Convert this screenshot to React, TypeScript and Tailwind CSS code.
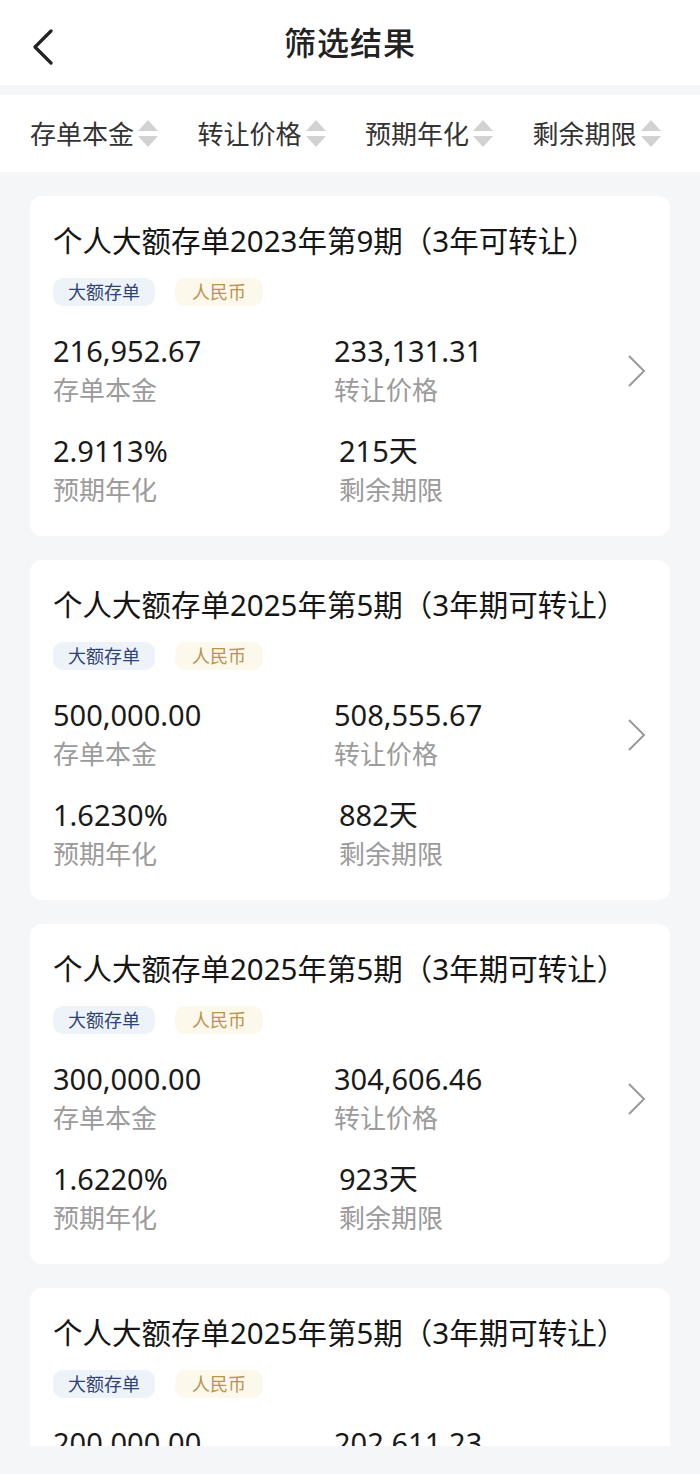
import React from "react";

const font = { fontFamily: '"Noto Sans", "Noto Sans CJK SC", sans-serif' };

type Item = {
  title: string;
  principal: string;
  price: string;
  rate: string;
  days: string;
};

const items: Item[] = [
  { title: "个人大额存单2023年第9期（3年可转让）", principal: "216,952.67", price: "233,131.31", rate: "2.9113%", days: "215天" },
  { title: "个人大额存单2025年第5期（3年期可转让）", principal: "500,000.00", price: "508,555.67", rate: "1.6230%", days: "882天" },
  { title: "个人大额存单2025年第5期（3年期可转让）", principal: "300,000.00", price: "304,606.46", rate: "1.6220%", days: "923天" },
  { title: "个人大额存单2025年第5期（3年期可转让）", principal: "200,000.00", price: "202,611.23", rate: "1.6220%", days: "900天" },
];

function SortIcon() {
  return (
    <svg width="20" height="28" viewBox="0 0 20 28" className="ml-[4px]">
      <path d="M10 0 L20 11 L0 11 Z" fill="#d2d2d2" />
      <path d="M0 16 L20 16 L10 27 Z" fill="#d2d2d2" />
    </svg>
  );
}

function Card({ item }: { item: Item }) {
  return (
    <div className="relative h-[340px] shrink-0 rounded-[12px] bg-white pl-[23px] pt-[28px]">
      <div className="h-[34px] text-[29.5px] leading-[34px] text-[#151515] whitespace-nowrap">{item.title}</div>
      <div className="mt-[20px] flex h-[28px] gap-[20px]">
        <span className="flex h-[28px] items-center rounded-[10px] bg-[#eef2f9] px-[15px] text-[18px] text-[#2e4472]">大额存单</span>
        <span className="flex h-[28px] items-center rounded-[10px] bg-[#fdf8ec] px-[17px] text-[18px] text-[#b99350]">人民币</span>
      </div>
      <div className="mt-[28px] flex">
        <div className="w-[281px]">
          <div className="h-[34px] text-[29px] leading-[34px] text-[#1a1a1a]">{item.principal}</div>
          <div className="mt-[5px] h-[34px] text-[26px] leading-[34px] text-[#9b9b9b]">存单本金</div>
        </div>
        <div>
          <div className="h-[34px] text-[29px] leading-[34px] text-[#1a1a1a]">{item.price}</div>
          <div className="mt-[5px] h-[34px] text-[26px] leading-[34px] text-[#9b9b9b]">转让价格</div>
        </div>
      </div>
      <div className="mt-[27px] flex">
        <div className="w-[286px]">
          <div className="h-[34px] text-[29px] leading-[34px] text-[#1a1a1a]">{item.rate}</div>
          <div className="mt-[5px] h-[34px] text-[26px] leading-[34px] text-[#9b9b9b]">预期年化</div>
        </div>
        <div>
          <div className="h-[34px] text-[29px] leading-[34px] text-[#1a1a1a]">{item.days}</div>
          <div className="mt-[5px] h-[34px] text-[26px] leading-[34px] text-[#9b9b9b]">剩余期限</div>
        </div>
      </div>
      <svg className="absolute left-[597px] top-[159px]" width="20" height="32" viewBox="0 0 20 32">
        <path d="M2 1 L17 16 L2 31" fill="none" stroke="#9a9a9a" strokeWidth="2" />
      </svg>
    </div>
  );
}

export default function App() {
  const filters = ["存单本金", "转让价格", "预期年化", "剩余期限"];
  return (
    <div style={font} className="flex h-[1474px] w-[700px] flex-col overflow-hidden bg-[#f5f6f7]">
      <div className="relative flex h-[85px] shrink-0 items-center justify-center bg-white">
        <svg className="absolute left-[31px] top-[29px]" width="24" height="36" viewBox="0 0 24 36">
          <path d="M20 2 L4 18 L20 34" fill="none" stroke="#222" strokeWidth="3.2" strokeLinecap="round" strokeLinejoin="round" />
        </svg>
        <div className="text-[32px] font-medium leading-none text-[#222] tracking-[1px]">筛选结果</div>
      </div>
      <div className="mt-[10px] flex h-[77px] shrink-0 items-center bg-white pl-[30px]">
        {filters.map((f) => (
          <div key={f} className="flex w-[171px] items-center">
            <span className="text-[26px] leading-none text-[#333]">{f}</span>
            <SortIcon />
          </div>
        ))}
      </div>
      <div className="flex h-[1274px] shrink-0 flex-col gap-[24px] overflow-hidden px-[30px] pt-[24px]">
        {items.map((it, i) => (
          <Card key={i} item={it} />
        ))}
      </div>
    </div>
  );
}
